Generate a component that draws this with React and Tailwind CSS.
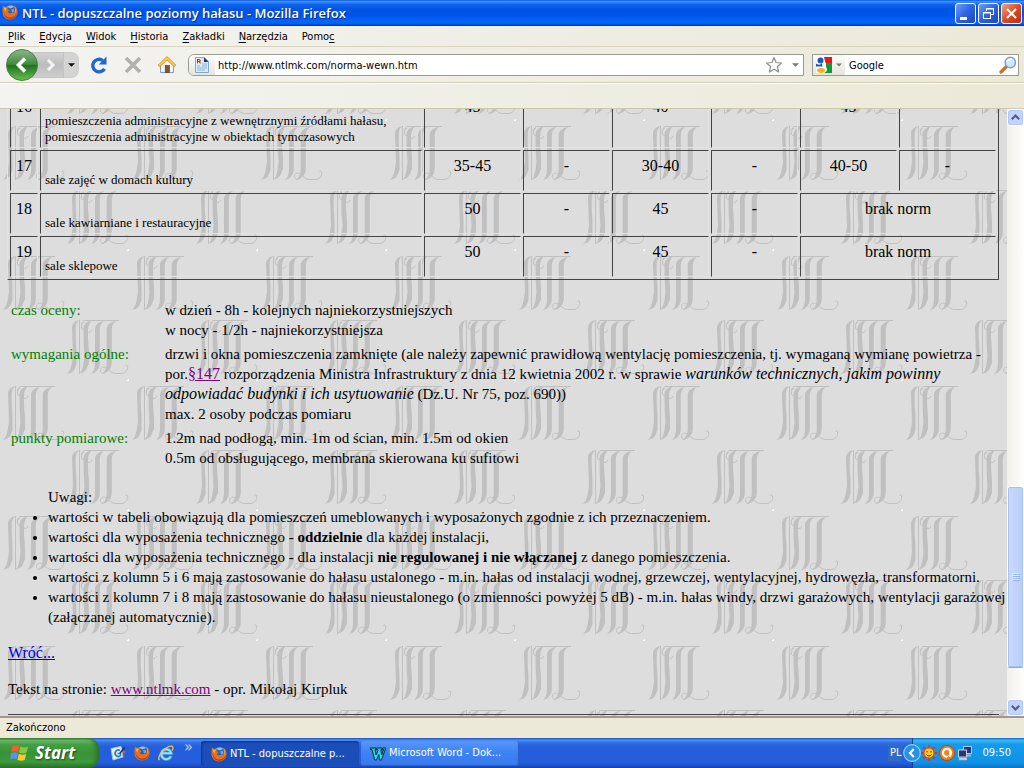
import React from "react";

const MENU = [
  ["", "P", "lik"],
  ["", "E", "dycja"],
  ["", "W", "idok"],
  ["", "H", "istoria"],
  ["", "Z", "akładki"],
  ["", "N", "arzędzia"],
  ["Pomo", "c", ""],
];

const ROWS = [
  {
    no: "16",
    name: "pomieszczenia administracyjne z wewnętrznymi źródłami hałasu, pomieszczenia administracyjne w obiektach tymczasowych",
    values: ["45", "-", "40", "-", "45", "-"],
  },
  { no: "17", name: "sale zajęć w domach kultury", values: ["35-45", "-", "30-40", "-", "40-50", "-"] },
  { no: "18", name: "sale kawiarniane i restauracyjne", values: ["50", "-", "45", "-"], none: true },
  { no: "19", name: "sale sklepowe", values: ["50", "-", "45", "-"], none: true },
];

function Firefox({ className }) {
  return (
    <svg viewBox="0 0 16 16" className={className} aria-hidden="true">
      <circle cx="8.4" cy="7" r="6" fill="#2f62b5" />
      <path d="M5 2.5C7 1 10.500 1 12 2.500C11 4 9 4.500 7.500 4z" fill="#8fc4ee" />
      <path d="M9 5.500l2.500-.8 1 2.500-2 1.500z" fill="#6aa5dd" />
      <path
        d="M1.200 1.200C1.800 2.400 2.500 2.800 3.600 2.800 4.800 2.500 6 2.800 6.800 3.300 5.500 3.700 5.300 4.500 5.600 5.300 6.500 5.500 7.300 5.700 7.200 6.300 6.800 7 6 7.100 5.900 7.900 6.200 9.300 8.100 9.700 9.700 8.900 10.800 8.400 11.600 8.800 11.400 9.300 12.700 8.500 13.300 6.500 12.700 4.500 12.500 3 11.900 2 11.200 1.300 14 2.200 15.700 5 15.500 8.300 15.300 12.500 12 15.500 8 15.500 3.600 15.500.5 12.200.5 8 .4 5.500.5 3.200 1.200 1.200z"
        fill="#e8701a"
      />
      <path d="M1.500 5C1.200 10 4 13.500 8 13.600 11.500 13.600 14 11.500 14.700 8.500 14.500 12.500 11.500 14.800 8 14.800 3.500 14.700.8 10.500 1.500 5z" fill="#b8360c" />
      <path d="M12.300 2.300C14.300 4 14.600 7.500 13.300 9.800 13.700 7 13.500 4.300 12.300 2.300zM2 3.500c1 .6 2 .4 3 .3-1 1-1.500 2-1.300 3.500C2.500 6.500 2 5 2 3.500z" fill="#fbb93a" />
    </svg>
  );
}

function Backdrop() {
  return (
    <svg className="absolute inset-0 h-full w-full" aria-hidden="true">
      <defs>
        <g id="mark" fill="#c0c0c0">
          <path d="M15.500 0C11 1 8 3.500 8 8L8.600 24 9 36 7.500 45C6.500 50 4.500 53 2.500 54 7 53.500 9.500 51.500 10.500 49L12.500 44V30L11.700 18V8C12 4 13 2 15.500 0z" />
          <rect x="15" y="0" width="1" height="54" />
          <path d="M28 0C22 1.500 19.500 5 19.500 9L19.700 24 20.500 36 19.500 44C18.500 50 17 53 14.500 54 19 53 21.500 51 22.500 49L25 43V32L24 18V9C24.500 5 26 2 28 0z" />
          <path d="M40 1C34 2 31 5 31 9V43C31 49 29 53 26.500 54 31 53.500 33 51 34 49 35.500 47 35.800 45 35.800 42V9C36 5 37.500 3 40 1z" />
          <path d="M52 1C46 2 42.700 5 42.700 9V43C42.700 49 40 53 37 54 42 53.500 45 51 46.500 48 47.500 46 47.800 44 47.800 41V9C48 5 49.500 3 52 1z" />
          <path
            d="M20 .5H55M20 .5C17.500 2 17 5 17.500 8 18 10 20 10 20.500 8M17.500 4.500 20 2M23.500 12C26 13 27.500 12 27.800 10M40 53.500C36 53 35.500 50 37.500 48 40 46 43 48 44.500 50 47 52 49 53.500 51.500 53.500H58C62 53 64.500 49 63.500 46 63 44.500 62 44.500 61.500 45.500"
            fill="none"
            stroke="#c0c0c0"
          />
        </g>
        <pattern id="tile" x="0" y="17" width="129" height="130" patternUnits="userSpaceOnUse">
          <rect width="129" height="130" fill="#dddddd" />
          <use href="#mark" x="0" y="0" />
          <use href="#mark" x="64" y="64" />
          <path d="M127 124h1v-1h1v2h-2z" fill="#ffffff" />
        </pattern>
      </defs>
      <rect width="100%" height="100%" fill="url(#tile)" />
    </svg>
  );
}

function TitleBar() {
  const button =
    "flex h-[21px] w-[21px] items-center justify-center rounded-[3px] border border-white bg-gradient-to-br";
  return (
    <header className="flex h-[26px] shrink-0 items-center bg-[linear-gradient(180deg,#0a5ade_0%,#3a93ff_6%,#1265ee_16%,#0054e3_35%,#0055e8_60%,#0366fd_82%,#0162f5_90%,#0036a8_100%)] pl-[2px] pr-[2px]">
      <Firefox className="mb-[3px] h-4 w-4" />
      <h1 className="ml-1 flex-1 truncate font-['Open_Sans',sans-serif] text-[13px] leading-5 font-semibold text-white [text-shadow:1px_1px_0_#0a2a80]">
        NTL - dopuszczalne poziomy hałasu - Mozilla Firefox
      </h1>
      <div className="flex gap-[2px]">
        <button aria-label="Minimalizuj" className={button + " from-[#6f9cf5] via-[#2f62e0] to-[#1c46c4]"}>
          <svg viewBox="0 0 19 19" className="h-[19px] w-[19px]"><rect x="4" y="13" width="7" height="3" fill="#fff" /></svg>
        </button>
        <button aria-label="Przywróć" className={button + " from-[#6f9cf5] via-[#2f62e0] to-[#1c46c4]"}>
          <svg viewBox="0 0 19 19" className="h-[19px] w-[19px]" fill="none" stroke="#fff">
            <path d="M7.500 7V4.500h7v6H12M7 5h8" />
            <rect x="4.500" y="8.500" width="7" height="6" />
            <path d="M4 9h8" />
          </svg>
        </button>
        <button aria-label="Zamknij" className={button + " from-[#f0a080] via-[#dc4a22] to-[#b8300c]"}>
          <svg viewBox="0 0 19 19" className="h-[19px] w-[19px]"><path d="M5 5l9 9M14 5l-9 9" stroke="#fff" strokeWidth="2.2" /></svg>
        </button>
      </div>
    </header>
  );
}

function Toolbar() {
  return (
    <div className="flex h-9 shrink-0 items-center border-b border-[#d2cdb4] pr-[5px] pl-1">
      <div className="flex h-8 items-center">
        <button aria-label="Wstecz" className="relative z-10 h-8 w-8">
          <svg viewBox="0 0 32 32" className="h-8 w-9">
            <defs>
              <linearGradient id="green" x1="0" y1="0" x2="0" y2="1">
                <stop offset="0" stopColor="#8db98a" />
                <stop offset=".48" stopColor="#3f8a3d" />
                <stop offset=".52" stopColor="#1f7220" />
                <stop offset="1" stopColor="#6cc04f" />
              </linearGradient>
            </defs>
            <circle cx="16" cy="16" r="15.500" fill="url(#green)" stroke="#4d7d4c" />
            <path d="M19 9.500L12.500 16l6.500 6.500" fill="none" stroke="#fff" strokeWidth="3.600" />
          </svg>
        </button>
        <button aria-label="Dalej" className="-ml-3 flex h-[26px] w-10 items-center justify-end border-y border-r border-[#c4c4c4] bg-gradient-to-b from-[#d2d2d2] via-[#bdbdbd] to-[#cdcdcd] pr-1">
          <svg viewBox="0 0 16 16" className="h-4 w-4"><path d="M5 3l5 5-5 5" fill="none" stroke="#f4f4f4" strokeWidth="3" /></svg>
        </button>
        <button aria-label="Ostatnie strony" className="flex h-[26px] w-[15px] items-center justify-center rounded-r-lg border-y border-r border-[#cfcfcb] bg-[#d4d4d2]">
          <svg viewBox="0 0 8 4" className="h-1 w-[7px]"><path d="M0 0h8L4 4z" fill="#111" /></svg>
        </button>
      </div>
      <button aria-label="Odśwież" className="ml-[10px] h-5 w-5">
        <svg viewBox="0 0 20 20" className="h-5 w-5">
          <path d="M15.500 13.800A6.300 6.300 0 1 1 13.800 5.500" fill="none" stroke="#1f68d0" strokeWidth="3.400" />
          <path d="M17.500 1.500V9.500H9.800z" fill="#1f68d0" />
        </svg>
      </button>
      <button aria-label="Zatrzymaj" className="ml-[14px] h-5 w-5">
        <svg viewBox="0 0 20 20" className="h-5 w-5"><path d="M3 3l14 14M17 3L3 17" stroke="#b1b1af" strokeWidth="3.600" /></svg>
      </button>
      <button aria-label="Strona startowa" className="ml-[14px] h-5 w-5">
        <svg viewBox="0 0 20 20" className="h-5 w-5">
          <path d="M3.500 9.500L10 4l6.500 5.500v8h-13z" fill="#eef4fc" stroke="#7d9cc8" />
          <path d="M10 1.500L1 10.200l1.800 1.500L10 5l7.200 6.700 1.800-1.500z" fill="#fbc63c" stroke="#d6952a" strokeWidth=".8" />
          <rect x="8.200" y="10.500" width="4.300" height="7" fill="#8a5526" stroke="#5f3816" strokeWidth=".6" />
        </svg>
      </button>
      <form className="ml-[11px] flex h-[22px] flex-1 items-center rounded-l-md border border-[#9c9b90] bg-white">
        <span className="flex h-full w-[26px] items-center justify-center rounded-l-md bg-gradient-to-b from-[#fbfbf9] to-[#e6e5dd]">
          <svg viewBox="0 0 16 16" className="h-4 w-4">
            <path d="M1.500.5h9l4 4v11h-13z" fill="#d9eafa" stroke="#7fa8d0" />
            <path d="M10 .5v4.500h4.500z" fill="#14376e" />
            <path d="M8 7h5M8 9h5M3 11h10M3 13h8M3 9h3" stroke="#8db4dc" />
            <rect x="2" y="1" width="5" height="6" fill="#fff" />
            <path d="M3.500 6.500v-4h1.700a1 1 0 0 1 0 2H3.500m1.700 0L6.500 6.500" fill="none" stroke="#d42010" strokeWidth="1.200" />
          </svg>
        </span>
        <input aria-label="Adres" defaultValue="http://www.ntlmk.com/norma-wewn.htm" className="min-w-0 flex-1 bg-transparent pt-[2px] pl-[3px] text-[11px] leading-4 text-black outline-none" />
        <button type="button" aria-label="Dodaj zakładkę" className="h-[18px] w-[18px]">
          <svg viewBox="0 0 18 18" className="h-[18px] w-[18px]"><path d="M9 1.500l2.100 5 5.400.5-4.100 3.500 1.200 5.500L9 13.200 4.400 16l1.200-5.500L1.500 7l5.400-.5z" fill="#fdfdfd" stroke="#8f8f8f" strokeWidth="1.200" strokeLinejoin="round" /></svg>
        </button>
        <button type="button" aria-label="Historia adresów" className="ml-1 flex h-4 w-4 items-center justify-center">
          <svg viewBox="0 0 8 4" className="h-1 w-[7px]"><path d="M0 0h8L4 4z" fill="#777" /></svg>
        </button>
      </form>
      <form className="ml-2 flex h-[22px] w-[207px] items-center border border-[#9c9b90] bg-white">
        <button type="button" aria-label="Wyszukiwarka" className="flex h-full w-[32px] items-center gap-1 bg-gradient-to-b from-[#fbfbf9] to-[#e6e5dd] pl-[3px]">
          <svg viewBox="0 0 16 16" className="h-4 w-4">
            <rect width="16" height="16" fill="#fff" />
            <path d="M8 0h8v6H9.500z" fill="#e01b1b" />
            <path d="M10 6h6v10H8c3-1.500 4-3 2-6z" fill="#0f9a3c" />
            <circle cx="4.500" cy="3.500" r="3" fill="#1c58c0" />
            <path d="M0 6.500c2 1.500 4 1.500 6 0l.5 3H0z" fill="#1c58c0" />
            <ellipse cx="5" cy="13.500" rx="4" ry="2.400" fill="#f5b21c" />
          </svg>
          <svg viewBox="0 0 8 4" className="h-1 w-[6px]"><path d="M0 0h8L4 4z" fill="#777" /></svg>
        </button>
        <input aria-label="Szukaj" defaultValue="Google" className="min-w-0 flex-1 bg-transparent pt-[2px] pl-1 text-[11px] leading-4 text-black outline-none" />
        <button type="button" aria-label="Szukaj" className="mr-[1px] h-[18px] w-[18px]">
          <svg viewBox="0 0 18 18" className="h-[18px] w-[18px]">
            <path d="M7.500 10.500L2 16" stroke="#c9702a" strokeWidth="3.200" strokeLinecap="round" />
            <circle cx="11.300" cy="6.500" r="5.200" fill="#cfe8fb" stroke="#7f9fc4" strokeWidth="1.400" />
            <path d="M8 5.500c1-2 3-2.500 5-2" stroke="#fff" strokeWidth="1.400" fill="none" />
          </svg>
        </button>
      </form>
    </div>
  );
}

function NormTable() {
  const cell = "border border-t-[#444444] border-l-[#444444] border-r-[#e2e2e2] border-b-[#e2e2e2] align-top";
  const value = cell + " pt-[5px] text-center";
  return (
    <table className="-mt-[21px] -ml-px w-[calc(100%+1px)] table-fixed border-separate border-spacing-[2px] border border-t-[#e2e2e2] border-l-[#e2e2e2] border-r-[#444444] border-b-[#444444]">
      <colgroup>
        <col className="w-7" />
        <col />
        <col className="w-[97px]" />
        <col className="w-[87px]" />
        <col className="w-[97px]" />
        <col className="w-[87px]" />
        <col className="w-[97px]" />
        <col className="w-[97px]" />
      </colgroup>
      <tbody>
        {ROWS.map((row) => (
          <tr key={row.no}>
            <td className={value}>{row.no}</td>
            <td className={cell + " pt-[21px] pb-[2px] pl-1 text-[13px] leading-4"}>
              <p className="max-w-[350px]">{row.name}</p>
            </td>
            {row.values.map((v, i) => (
              <td key={i} className={value}>{v}</td>
            ))}
            {row.none && <td colSpan={2} className={value}>brak norm</td>}
          </tr>
        ))}
      </tbody>
    </table>
  );
}

function Page() {
  return (
    <main className="relative min-w-0 flex-1 overflow-hidden">
      <Backdrop />
      <div className="relative px-2 font-['Liberation_Serif',serif] text-[16px] leading-5 text-black">
        <NormTable />
        <dl className="mt-5 grid grid-cols-[154px_1fr] gap-y-1 pl-[3px] text-[15px]">
          <dt className="text-[#008000]">czas oceny:</dt>
          <dd>
            w dzień - 8h - kolejnych najniekorzystniejszych
            <br />w nocy - 1/2h - najniekorzystniejsza
          </dd>
          <dt className="text-[#008000]">wymagania ogólne:</dt>
          <dd>
            drzwi i okna pomieszczenia zamknięte (ale należy zapewnić prawidłową wentylację pomieszczenia, tj. wymaganą wymianę powietrza -
            <br />
            por.<a href="#par147" className="text-[16px] text-[#800080] underline">§147</a> rozporządzenia Ministra Infrastruktury z dnia 12 kwietnia 2002 r. w sprawie{" "}
            <i className="text-[16px]">
              warunków technicznych, jakim powinny
              <br />
              odpowiadać budynki i ich usytuowanie
            </i>{" "}
            (Dz.U. Nr 75, poz. 690))
            <br />
            max. 2 osoby podczas pomiaru
          </dd>
          <dt className="text-[#008000]">punkty pomiarowe:</dt>
          <dd>
            1.2m nad podłogą, min. 1m od ścian, min. 1.5m od okien
            <br />
            0.5m od obsługującego, membrana skierowana ku sufitowi
          </dd>
        </dl>
        <p className="mt-[19px] pl-10 text-[15px]">Uwagi:</p>
        <ul className="-mr-2 list-disc pl-10 text-[15px]">
          <li>wartości w tabeli obowiązują dla pomieszczeń umeblowanych i wyposażonych zgodnie z ich przeznaczeniem.</li>
          <li>wartości dla wyposażenia technicznego - <b>oddzielnie</b> dla każdej instalacji,</li>
          <li>wartości dla wyposażenia technicznego - dla instalacji <b>nie regulowanej i nie włączanej</b> z danego pomieszczenia.</li>
          <li>wartości z kolumn 5 i 6 mają zastosowanie do hałasu ustalonego - m.in. hałas od instalacji wodnej, grzewczej, wentylacyjnej, hydrowęzła, transformatorni.</li>
          <li className="whitespace-nowrap">
            wartości z kolumn 7 i 8 mają zastosowanie do hałasu nieustalonego (o zmienności powyżej 5 dB) - m.in. hałas windy, drzwi garażowych, wentylacji garażowej
            <br />
            (załączanej automatycznie).
          </li>
        </ul>
        <p className="mt-4"><a href="#wroc" className="text-[#0000ee] underline">Wróć...</a></p>
        <p className="mt-4 text-[15px]">
          Tekst na stronie: <a href="#ntlmk" className="text-[#800080] underline">www.ntlmk.com</a> - opr. Mikołaj Kirpluk
        </p>
        <hr className="mt-[15px] border-t border-[#444444]" />
      </div>
    </main>
  );
}

function ScrollBar() {
  const button =
    "flex h-[17px] w-full shrink-0 items-center justify-center rounded-[3px] border border-white bg-[#c3d3fc] shadow-[inset_0_0_0_1px_#b4c8f6]";
  return (
    <div className="flex w-[17px] shrink-0 flex-col bg-gradient-to-r from-[#f1f0ea] to-[#fefefb]">
      <button aria-label="W górę" className={button}>
        <svg viewBox="0 0 9 9" className="h-[9px] w-[9px]"><path d="M.8 6.200L4.500 2.500l3.700 3.700" fill="none" stroke="#4d6185" strokeWidth="2.200" /></svg>
      </button>
      <div className="grow-[361] basis-0" />
      <div className="flex grow-[181] basis-0 items-center justify-center rounded-[3px] border border-white border-b-[#8aa8e0] bg-gradient-to-r from-[#cbdafd] to-[#b9cdfa] shadow-[inset_0_0_0_1px_#a9c0f3]">
        <svg viewBox="0 0 8 8" className="h-2 w-2"><path d="M0 .5h7M0 2.500h7M0 4.500h7M0 6.500h7" stroke="#eef4fe" /><path d="M1 1.500h7M1 3.500h7M1 5.500h7M1 7.500h7" stroke="#8cb0f8" /></svg>
      </div>
      <div className="grow-[31] basis-0" />
      <button aria-label="W dół" className={button}>
        <svg viewBox="0 0 9 9" className="h-[9px] w-[9px]"><path d="M.8 2.800l3.700 3.700 3.700-3.700" fill="none" stroke="#4d6185" strokeWidth="2.200" /></svg>
      </button>
    </div>
  );
}

function TaskBar() {
  return (
    <footer className="flex h-[30px] shrink-0 items-stretch bg-[linear-gradient(180deg,#1f4fb8_0%,#4a8ff5_7%,#2f6fe6_16%,#245edb_30%,#245edb_82%,#1d4ebf_94%,#173f9f_100%)] text-[11px] text-white">
      <button className="flex w-[99px] items-center gap-[5px] rounded-r-[10px] bg-[linear-gradient(180deg,#2f7d2f_0%,#6fb86c_8%,#42a042_22%,#3a9238_50%,#3c9c3c_80%,#2a6f2a_100%)] pl-[10px] shadow-[inset_-4px_0_5px_-1px_#2b6e2b]">
        <svg viewBox="0 0 20 18" className="h-[18px] w-5">
          <path d="M2.500 2C5 .6 7 .8 9.300 2L8 8C6 7 3.700 7 1.200 8z" fill="#f0622c" />
          <path d="M10.300 2.600C13 3.800 15.500 3.700 18 2.500L16.500 8.600C14 9.800 11.500 9.700 9 8.600z" fill="#8cc63e" />
          <path d="M1 9.200C3.500 8 5.700 8.200 7.800 9.200L6.500 15.200C4.500 14.200 2 14.200 0 15.200z" fill="#5b93ee" />
          <path d="M8.800 9.800C11.500 11 13.700 11 16.200 9.800L14.800 15.800C12.500 17 10 17 7.500 15.800z" fill="#fbcb2c" />
        </svg>
        <span className="font-['Noto_Sans',sans-serif] text-[17px] leading-6 font-bold italic [text-shadow:1px_1px_2px_#1d4a1d]">Start</span>
      </button>
      <nav aria-label="Szybkie uruchamianie" className="flex w-[102px] items-center gap-2 pl-[11px]">
        <button aria-label="Pokaż pulpit" className="h-4 w-4">
          <svg viewBox="0 0 16 16" className="h-4 w-4">
            <path d="M1 3.500L11 1.500l2 10.500L3 15z" fill="#e9f3fc" stroke="#9cc3e8" />
            <path d="M10 5.500a3.200 3.200 0 1 0 .5 5V8.500H7.500" fill="none" stroke="#2a76c4" strokeWidth="1.600" />
            <path d="M10 8l5-5.500" stroke="#16365f" strokeWidth="1.600" />
            <circle cx="14" cy="7" r="1.400" fill="#e0562c" />
          </svg>
        </button>
        <button aria-label="Firefox" className="h-4 w-4"><Firefox className="h-4 w-4" /></button>
        <button aria-label="Internet Explorer" className="h-4 w-4">
          <svg viewBox="0 0 16 16" className="h-4 w-4">
            <path d="M12.900 11.200A5 5 0 1 1 13.200 8.200H4.500" fill="none" stroke="#2f8fe0" strokeWidth="3.600" />
            <path d="M12.900 11.200A5 5 0 1 1 13.200 8.200H4.500" fill="none" stroke="#a4dcfd" strokeWidth="2" />
            <path d="M1.500 15C-1 12.500 4 5 9 2.500c3-1.600 6-2 6 .5 0 1-.5 2-1 2.700" fill="none" stroke="#f6c63b" strokeWidth="1.300" />
          </svg>
        </button>
        <span className="mb-3 pl-[2px] text-[16px] leading-3 text-[#b9d2fb]">»</span>
      </nav>
      <div className="flex flex-1 items-center gap-[2px] pt-[3px] pb-[2px]">
        <button className="flex h-full w-[158px] items-center gap-[3px] rounded-[3px] bg-[#1b4eb8] pl-[10px] shadow-[inset_1px_1px_2px_#0f337f]">
          <Firefox className="h-4 w-4 shrink-0" />
          <span className="truncate pt-px">NTL - dopuszczalne p...</span>
        </button>
        <button className="flex h-full w-[158px] items-center gap-[3px] rounded-[3px] bg-gradient-to-b from-[#5796fa] via-[#3c81f3] to-[#3a7bec] pl-[9px] shadow-[inset_-1px_-1px_1px_#2a5fc9]">
          <svg viewBox="0 0 16 16" className="h-4 w-4 shrink-0">
            <path d="M0 2h6v1.500H5L6 9l2-4.500-.3-1H6.500V2H12v1.500h-1.200L11.700 9l2-5.500h-1.200V2H16v1.500h-.8L11.500 14H9.700L8.800 8.500 6.500 14H4.600L2 3.500H0z" fill="#19e3e3" stroke="#062a3a" strokeWidth="1" />
          </svg>
          <span className="truncate">Microsoft Word - Dok...</span>
        </button>
      </div>
      <span className="mr-[10px] flex items-center self-center bg-[#316ac5] pr-px pl-[2px] leading-4">PL</span>
      <div className="flex items-center border-l border-[#0d3f9c] bg-[linear-gradient(180deg,#0f6fd0_0%,#3cb4f8_8%,#129bea_22%,#1193e6_80%,#0d74c6_100%)] pr-[13px]">
        <button aria-label="Pokaż ukryte ikony" className="-ml-[10px] h-[18px] w-[18px]">
          <svg viewBox="0 0 18 18" className="h-[18px] w-[18px]">
            <circle cx="9" cy="9" r="8.300" fill="#2a8fe8" stroke="#8fd2fb" strokeWidth="1.200" />
            <path d="M10.800 5L7 9l3.800 4" fill="none" stroke="#fff" strokeWidth="2.200" />
          </svg>
        </button>
        <svg viewBox="0 0 16 16" className="h-4 w-4" aria-hidden="true">
          <path d="M8 0v16M0 8h16M2.300 2.300l11.400 11.400M13.700 2.300L2.300 13.700" stroke="#e8301a" strokeWidth="2" />
          <circle cx="8" cy="8" r="5" fill="#ffcf1f" stroke="#e8501a" />
          <path d="M6 6v1.500M10 6v1.500M5.500 9.500c1.500 2 3.500 2 5 0" stroke="#5a2b00" fill="none" />
        </svg>
        <svg viewBox="0 0 16 16" className="ml-[2px] h-4 w-4" aria-hidden="true">
          <circle cx="8" cy="8" r="7.500" fill="#f0801c" stroke="#b8480c" />
          <circle cx="8" cy="7.800" r="4" fill="none" stroke="#fff" strokeWidth="2.200" />
          <path d="M7 13.800l3.500-4 2 3z" fill="#f0801c" />
          <path d="M11 6.500v5.500" stroke="#fff" strokeWidth="1.800" />
        </svg>
        <svg viewBox="0 0 16 16" className="ml-[2px] h-4 w-4" aria-hidden="true">
          <rect x="6.500" y="1.500" width="8" height="7" fill="#27367a" stroke="#b9c2dc" />
          <path d="M9 10.500h5" stroke="#aab3cf" strokeWidth="2" />
          <rect x="1.500" y="5" width="8" height="7" fill="#27367a" stroke="#c9d0e4" />
          <path d="M2 14h8" stroke="#c3cae0" strokeWidth="2.400" />
        </svg>
        <time className="ml-[9px] leading-4">09:50</time>
      </div>
    </footer>
  );
}

export default function App() {
  return (
    <div className="flex h-screen flex-col overflow-hidden bg-gradient-to-r from-[#f3f3f1] to-[#ece9d8] font-['DejaVu_Sans_Condensed','DejaVu_Sans',sans-serif]">
      <TitleBar />
      <nav className="flex h-[21px] shrink-0 items-center gap-[14px] border-b border-[#d8d4c0] pt-[2px] pl-2 text-[11px] leading-4 text-black">
        {MENU.map(([before, key, after]) => (
          <button key={key}>{before}<u className="underline-offset-2">{key}</u>{after}</button>
        ))}
      </nav>
      <Toolbar />
      <div className="h-[26px] shrink-0 border-t border-b border-t-white border-b-[#cdc8ad]" />
      <div className="flex min-h-0 flex-1">
        <Page />
        <ScrollBar />
      </div>
      <div className="flex h-[22px] shrink-0 items-center border-t-2 border-[#9d998c] bg-[#ece9d8] pl-[6px] text-[11px] leading-4 text-black">
        Zakończono
      </div>
      <TaskBar />
    </div>
  );
}
